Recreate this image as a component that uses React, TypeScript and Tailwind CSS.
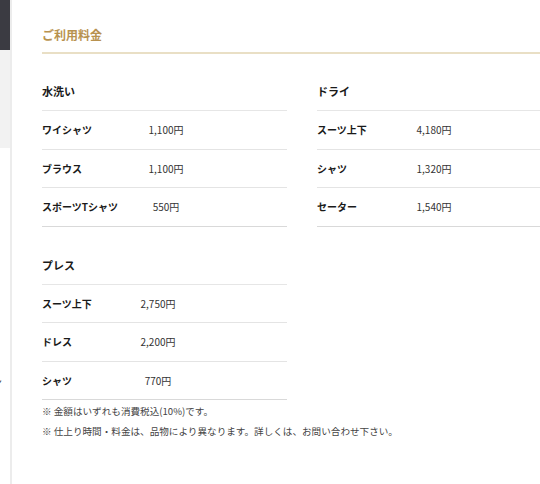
import React from "react";

type Item = { name: string; price: string };

const font = { fontFamily: '"Noto Sans CJK JP", "Noto Sans", sans-serif' };

function PriceTable({
  title,
  items,
  nameWidth,
}: {
  title: string;
  items: Item[];
  nameWidth: string;
}) {
  return (
    <div className="flex flex-col">
      <div className="h-[30px] border-b border-[#e6e6e6] text-[11px] font-bold leading-[20px] text-[#1a1a1a]">
        {title}
      </div>
      {items.map((it, i) => (
        <div
          key={i}
          className={`flex h-[38.5px] items-center border-b text-[10px] ${
            i === items.length - 1 ? "border-[#d9d9d9]" : "border-[#e4e4e4]"
          }`}
        >
          <div className={`${nameWidth} shrink-0 font-bold text-[#1a1a1a]`}>{it.name}</div>
          <div className="w-[60px] shrink-0 text-center text-[#333]">{it.price}</div>
        </div>
      ))}
    </div>
  );
}

export default function App() {
  return (
    <div className="flex h-[484px] w-[540px] overflow-hidden bg-white" style={font}>
      <div className="relative flex w-[10px] shrink-0 flex-col overflow-hidden">
        <div className="h-[50px] bg-[#3b3b42]" />
        <div className="h-[98px] bg-[#f2f2f2]" />
        <div className="relative flex-1 bg-white">
          <span className="absolute left-[-8px] top-[229px] text-[10px] leading-[10px] text-[#444]">ン</span>
        </div>
      </div>
      <div className="w-[2px] shrink-0 bg-[#ececec]" />
      <div className="flex min-w-0 flex-1 flex-col pl-[30px] pt-[25px]">
        <div className="w-[560px] border-b-2 border-[#e9dfc5] pb-[7px] text-[12px] font-bold leading-[20px] text-[#b8924f]">
          ご利用料金
        </div>
        <div className="mt-[27px] grid w-[520px] grid-cols-[245px_245px] gap-x-[30px] gap-y-[28px]">
          <PriceTable
            title="水洗い"
            nameWidth="w-[94px]"
            items={[
              { name: "ワイシャツ", price: "1,100円" },
              { name: "ブラウス", price: "1,100円" },
              { name: "スポーツTシャツ", price: "550円" },
            ]}
          />
          <PriceTable
            title="ドライ"
            nameWidth="w-[87px]"
            items={[
              { name: "スーツ上下", price: "4,180円" },
              { name: "シャツ", price: "1,320円" },
              { name: "セーター", price: "1,540円" },
            ]}
          />
          <PriceTable
            title="プレス"
            nameWidth="w-[86px]"
            items={[
              { name: "スーツ上下", price: "2,750円" },
              { name: "ドレス", price: "2,200円" },
              { name: "シャツ", price: "770円" },
            ]}
          />
        </div>
        <div className="mt-[1px] text-[9.6px] leading-[20px] text-[#444]">
          <p>※ 金額はいずれも消費税込(10%)です。</p>
          <p>※ 仕上り時間・料金は、品物により異なります。詳しくは、お問い合わせ下さい。</p>
        </div>
      </div>
    </div>
  );
}
